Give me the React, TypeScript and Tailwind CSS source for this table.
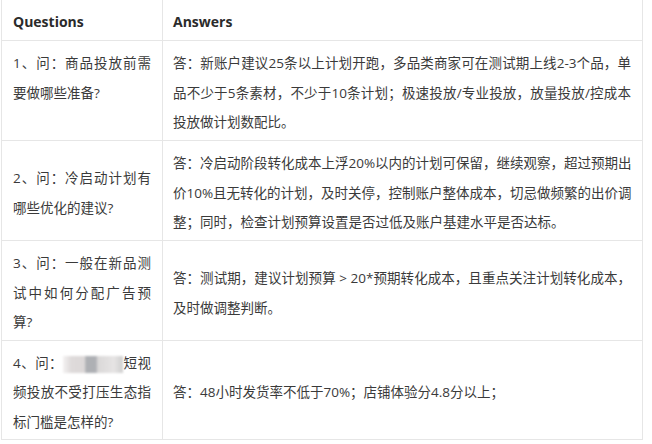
import React from "react";

type Row = {
  q: React.ReactNode[];
  a: string[];
  qTop?: boolean;
  last?: boolean;
};

const Blurred = () => (
  <span className="inline-block h-[17px] w-[60px] align-middle blur-[1px] bg-[linear-gradient(to_right,#f4f2f2_0%,#dedada_14%,#dcd8d8_36%,#aeb0b4_38%,#aeb0b4_55%,#dad8d8_58%,#e6e4e4_85%,#cfcfcf_100%)]" />
);

const rows: Row[] = [
  {
    q: ["1、问：商品投放前需", "要做哪些准备?"],
    a: [
      "答：新账户建议25条以上计划开跑，多品类商家可在测试期上线2-3个品，单",
      "品不少于5条素材，不少于10条计划；极速投放/专业投放，放量投放/控成本",
      "投放做计划数配比。",
    ],
    qTop: true,
  },
  {
    q: ["2、问：冷启动计划有", "哪些优化的建议?"],
    a: [
      "答：冷启动阶段转化成本上浮20%以内的计划可保留，继续观察，超过预期出",
      "价10%且无转化的计划，及时关停，控制账户整体成本，切忌做频繁的出价调",
      "整；同时，检查计划预算设置是否过低及账户基建水平是否达标。",
    ],
  },
  {
    q: ["3、问：一般在新品测", "试中如何分配广告预", "算?"],
    a: [
      "答：测试期，建议计划预算 > 20*预期转化成本，且重点关注计划转化成本，",
      "及时做调整判断。",
    ],
  },
  {
    q: [
      <>
        4、问：
        <Blurred />
        短视
      </>,
      "频投放不受打压生态指",
      "标门槛是怎样的?",
    ],
    a: ["答：48小时发货率不低于70%；店铺体验分4.8分以上；"],
    last: true,
  },
];

// each wrapped line is its own block so the breaks match the screenshot
function Lines({ lines }: { lines: React.ReactNode[] }) {
  return (
    <>
      {lines.map((line, i) => (
        <span
          key={i}
          className={
            i < lines.length - 1
              ? "block whitespace-nowrap [text-align-last:justify]"
              : "block whitespace-nowrap"
          }
        >
          {line}
        </span>
      ))}
    </>
  );
}

export default function App() {
  return (
    <div lang="zh-CN" className="min-h-[444px] bg-white">
      <div
        className="ml-px w-[642px] border-x border-[#e6e6e6] text-[13.5px] leading-[29.5px] text-[#3a3a3a]"
        style={{ fontFamily: '"Open Sans", "Noto Sans CJK SC", sans-serif' }}
      >
        {/* header */}
        <div className="grid h-[41px] grid-cols-[161px_1fr] border-b border-[#e6e6e6] text-[14px] font-bold text-[#2b2b2b]">
          <div className="flex items-center border-r border-[#e6e6e6] pl-[11px] pt-[4px]">
            Questions
          </div>
          <div className="flex items-center pl-[10px] pt-[4px]">Answers</div>
        </div>

        {rows.map((row, i) => (
          <div
            key={i}
            className={`grid grid-cols-[161px_1fr] border-b border-[#e6e6e6] ${
              row.last ? "h-[99px]" : "h-[100px]"
            }`}
          >
            <div
              className={`flex flex-col border-r border-[#e6e6e6] px-[11px] ${
                row.qTop ? "justify-start pt-[8px]" : "justify-center pt-[6px]"
              }`}
            >
              <Lines lines={row.q} />
            </div>
            <div className="flex flex-col justify-center pl-[10px] pr-[11px] pt-[6px]">
              <Lines lines={row.a} />
            </div>
          </div>
        ))}
      </div>
    </div>
  );
}
